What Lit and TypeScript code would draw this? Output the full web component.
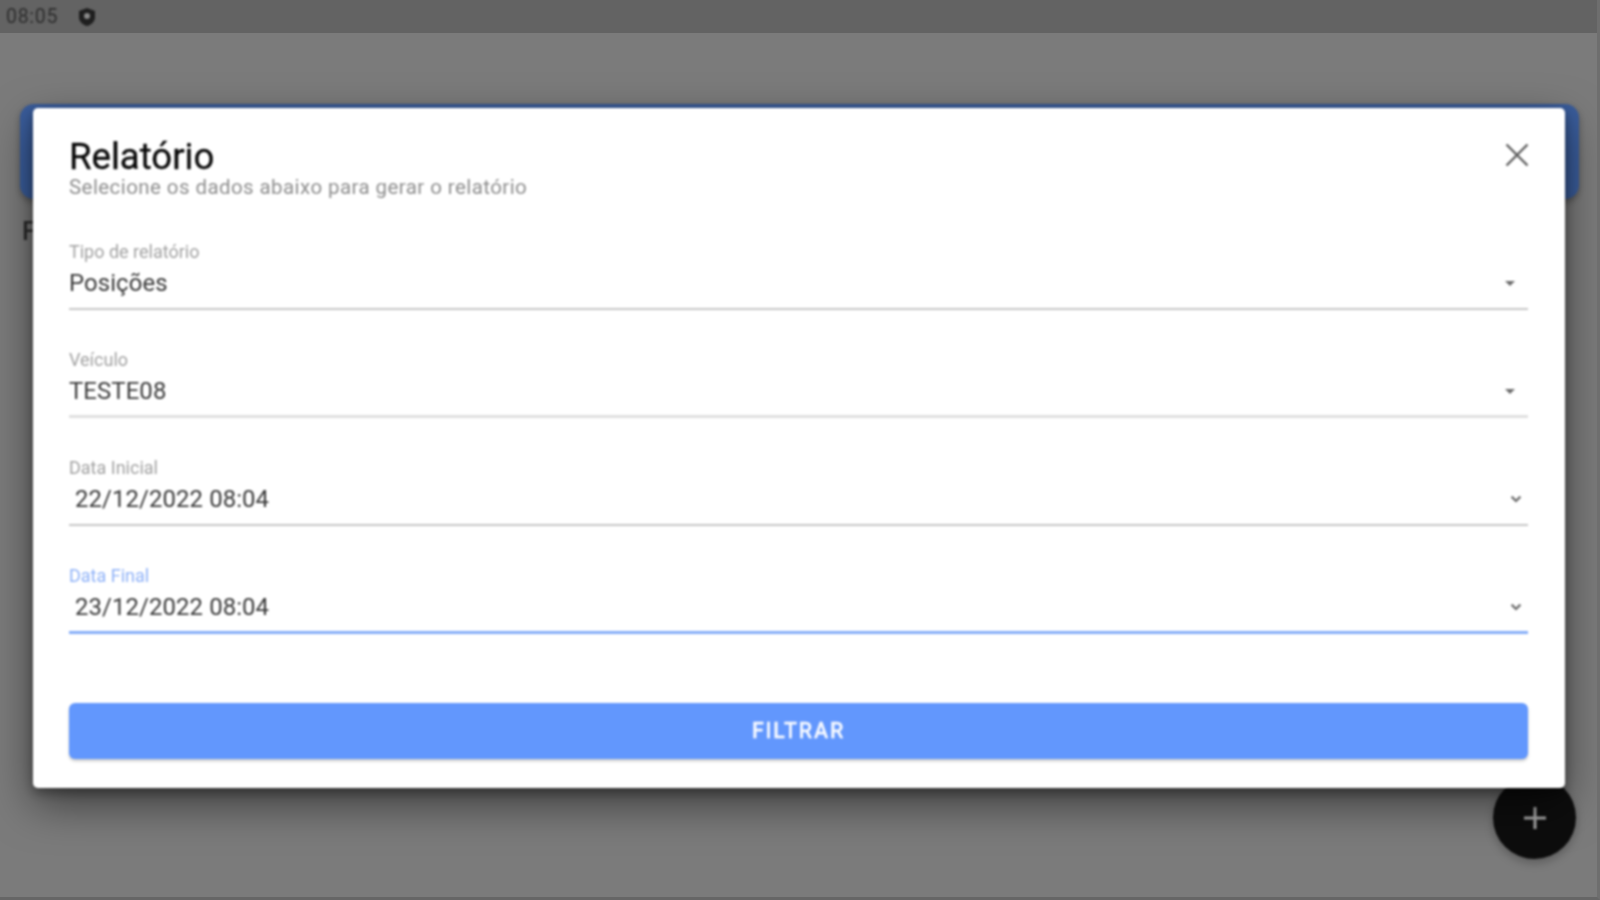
import { LitElement, html, css, svg } from "lit";
import { customElement } from "lit/decorators.js";

const caret = svg`<svg class="caret" width="24" height="24" viewBox="0 0 24 24"><path d="M7 10l5 5 5-5z" fill="#6a6a6a"/></svg>`;
const chevron = svg`<svg class="caret" width="24" height="24" viewBox="0 0 24 24"><path d="M7.600 9.600L12 14l4.400-4.400" fill="none" stroke="#6a6a6a" stroke-width="2.200"/></svg>`;

@customElement("app-root")
export class AppRoot extends LitElement {
  static styles = css`
    :host { display: block; width: 1600px; height: 900px; font-family: Roboto, "Liberation Sans", sans-serif; }
    .page { position: relative; width: 1600px; height: 900px; overflow: hidden; background: #7b7b7b; border-right: 3px solid #6e6e6e; border-bottom: 3px solid #666; box-sizing: border-box; }
    .status { height: 33px; background: #636363; display: flex; align-items: center; padding-left: 6px; gap: 19px; color: #2e2e2e; font-size: 19.500px; letter-spacing: 0.7px; }
    .status > *, .band, .behind, .fab, .dialog { filter: blur(0.8px); }
    .status svg { display: block; }
    .back { padding: 71px 18px 0 20px; }
    .band { height: 95px; background: #3a5d9c; border-radius: 14px; box-shadow: 0 3px 6px rgba(0,0,0,.3); }
    .behind { margin-top: 17px; font-size: 26px; font-weight: 500; color: #2b2b2b; line-height: 30px; margin-left: 2px; }
    .fab { position: absolute; left: 1493px; top: 776px; width: 83px; height: 83px; border-radius: 50%; background: #0d0d0d; display: flex; align-items: center; justify-content: center; box-shadow: 0 4px 10px rgba(0,0,0,.25); }
    .dialog { position: absolute; left: 33px; top: 108px; width: 1532px; height: 680px; box-sizing: border-box; background: #fff; border-radius: 5px; padding: 29px 37px 29px 36px; display: flex; flex-direction: column; box-shadow: 0 16px 44px rgba(0,0,0,.5), 0 5px 12px rgba(0,0,0,.35); }
    .head { display: flex; justify-content: space-between; align-items: flex-start; }
    h1 { margin: 0; font-size: 36.600px; font-weight: 400; line-height: 40px; color: #0a0a0a; -webkit-text-stroke: 0.3px #0a0a0a; }
    .sub { font-size: 20.500px; line-height: 20px; color: #8e8e8e; letter-spacing: 0.42px; }
    .close { display: block; margin: 6px -1px 0 0; }
    .fields { margin-top: 45px; display: flex; flex-direction: column; gap: 40px; }
    .field { height: 68px; box-sizing: border-box; display: flex; flex-direction: column; border-bottom: 2px solid #c6c6c6; }
    .field.light { border-bottom-color: #e0e0e0; border-bottom-width: 3px; }
    .field.focus { border-bottom: 3px solid #86aef8; }
    label { font-size: 18px; line-height: 20px; color: #a2a2a2; }
    .focus label { color: #8fb2f8; }
    .row { display: flex; justify-content: space-between; align-items: center; margin-top: 5px; font-size: 23.900px; line-height: 32px; color: #3a3a3a; letter-spacing: 0.1px; }
    .row.date { padding-left: 6px; }
    .row svg { margin-right: 6px; }
    .row.date svg { margin-right: 0; }
    button { margin-top: auto; height: 56px; width: 100%; border: 0; border-radius: 6px; padding: 0 0 2px; background: #6297fd; color: #f6f9ff; font: 500 21.300px Roboto, "Liberation Sans", sans-serif; letter-spacing: 1.800px; box-shadow: 0 2px 3px rgba(0,0,0,.22); -webkit-text-stroke: 0.3px #f6f9ff; }
  `;

  field(label: string, value: string, cls = "", date = false) {
    return html`<div class="field ${cls}">
      <label>${label}</label>
      <div class="row ${date ? "date" : ""}"><span>${value}</span>${date ? chevron : caret}</div>
    </div>`;
  }

  render() {
    return html`<div class="page">
      <div class="status">
        <span>08:05</span>
        <svg width="20" height="20" viewBox="0 0 20 20"><path d="M10 1l8 3v6c0 4.500-3.400 7.800-8 9-4.600-1.200-8-4.500-8-9V4z" fill="#1f1f1f"/><circle cx="10" cy="9" r="3" fill="#8a8a8a"/></svg>
      </div>
      <div class="back">
        <div class="band"></div>
        <div class="behind">F</div>
      </div>
      <div class="fab">
        <svg width="26" height="26" viewBox="0 0 26 26"><path d="M13 2v22M2 13h22" stroke="#a8a8a8" stroke-width="3"/></svg>
      </div>
      <div class="dialog">
        <div class="head">
          <div>
            <h1>Relatório</h1>
            <div class="sub">Selecione os dados abaixo para gerar o relatório</div>
          </div>
          <svg class="close" width="24" height="24" viewBox="0 0 24 24"><path d="M1.500 1.500l21 21M22.500 1.500l-21 21" stroke="#5f5f5f" stroke-width="2.400"/></svg>
        </div>
        <div class="fields">
          ${this.field("Tipo de relatório", "Posições")}
          ${this.field("Veículo", "TESTE08", "light")}
          ${this.field("Data Inicial", "22/12/2022 08:04", "", true)}
          ${this.field("Data Final", "23/12/2022 08:04", "focus", true)}
        </div>
        <button>FILTRAR</button>
      </div>
    </div>`;
  }
}
